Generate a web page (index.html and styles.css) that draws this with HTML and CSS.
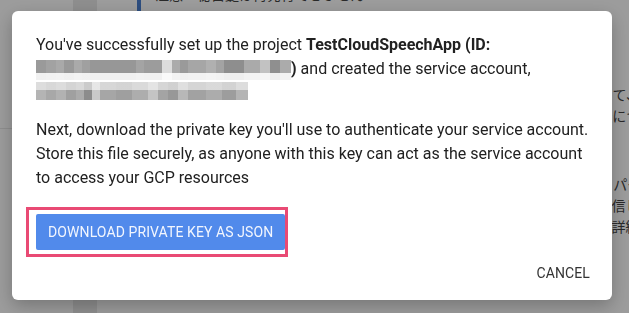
FILE: index.html
```html
<!DOCTYPE html>
<html lang="en">
<head>
  <meta charset="UTF-8" />
  <meta name="viewport" content="width=device-width, initial-scale=1.0"/>
  <title>Create service account key</title>
  <link rel="stylesheet" href="styles.css">
</head>
<body>
  <!-- Page behind the modal -->
  <div class="page">
    <nav class="side">
      <div class="side-item"></div>
    </nav>
    <div class="rail"></div>
    <main class="content">
      <div class="note">注意：秘密鍵は再発行できません</div>
      <p class="ja first">次の手順では、作成したサービスアカウントの秘密鍵を安全な場所に保存して、アプリから利用します。<br>また認証情報の取り扱いには十分注意してください。詳しい手順と設定方法については、以下を参照してください。</p>
      <p class="ja second">サービスアカウントにはプロジェクトに対するロールが自動的に付与され、パーミッションの設定が必要です。<br>設定したパーミッションに基づいて、アプリケーションからリクエストを送信します。<br>送信されたリクエストはすべてログに記録され、監査ログの画面から内容の詳細を確認できます。</p>
    </main>
  </div>

  <!-- Modal -->
  <div class="scrim">
    <div class="dialog">
      <p>You've successfully set up the project <strong>TestCloudSpeechApp (ID:<br><span class="redact r1"></span>)</strong> and created the service account,<br><span class="redact r2"></span></p>
      <p>Next, download the private key you'll use to authenticate your service account.<br>Store this file securely, as anyone with this key can act as the service account<br>to access your GCP resources</p>
      <div class="key-action">
        <button class="btn-primary">Download private key as JSON</button>
        <span class="highlight"></span>
      </div>
      <div class="actions">
        <button class="btn-text">Cancel</button>
      </div>
    </div>
  </div>
</body>
</html>
```

FILE: styles.css
```css
html, body {
  margin: 0;
  height: 100%;
  overflow: hidden;
}
body {
  font-family: Roboto, "Noto Sans CJK JP", sans-serif;
  background: #ffffff;
  color: #212121;
}

/* background page */
.page {
  display: flex;
  height: 100%;
}
.side {
  width: 73px;
  flex-shrink: 0;
}
.side-item {
  height: 128px;
  border-bottom: 1px solid #e8e8e8;
}
.rail {
  width: 24px;
  flex-shrink: 0;
  background: #e9e9e9;
}
.content {
  padding-left: 40px;
  font-family: "Noto Sans CJK JP", sans-serif;
  font-size: 14px;
  line-height: 21px;
  color: #444;
  white-space: nowrap;
}
.note {
  margin-top: -16px;
  padding: 0 0 28px 14px;
  border-left: 4px solid #4a7fd0;
}
.ja {
  margin: 0;
}
.ja.first { margin-top: 51px; }
.ja.second { margin-top: 48px; }

/* modal */
.scrim {
  position: fixed;
  inset: 0;
  background: rgba(0, 0, 0, 0.39);
  display: flex;
  align-items: flex-start;
  padding: 11px 0 0 12px;
}
.dialog {
  width: 600px;
  box-sizing: border-box;
  background: #ffffff;
  border-radius: 6px;
  padding: 22px 24px 9px 24px;
  box-shadow: 0 6px 18px rgba(0, 0, 0, 0.25);
  font-size: 16px;
  line-height: 24px;
}
.dialog p {
  margin: 0 0 13px;
  white-space: nowrap;
}
.dialog p + p {
  margin-bottom: 24px;
}
.dialog strong {
  font-weight: bold;
}

.redact {
  display: inline-block;
  width: 255px;
  height: 20px;
  vertical-align: -6px;
}
.r1 {
  background:
    linear-gradient(to bottom, transparent 0 64%, rgba(255, 255, 255, 0.86) 64%),
    linear-gradient(to right,
      #9a9a9a 0 10px, #a2a2a2 10px 20px, #a9a9a9 20px 28px, #999 28px 38px,
      #aaa 38px 46px, #a0a0a0 46px 54px, #979797 54px 100px, #a4a4a4 100px 108px,
      #9c9c9c 108px 126px, #dcdcdc 126px 136px, #ababab 136px 144px, #9a9a9a 144px 152px,
      #a6a6a6 152px 170px, #b0b0b0 170px 180px, #a3a3a3 180px 188px, #8e8e8e 188px 208px,
      #aaa 208px 224px, #c2c2c2 224px 234px, #8f8f8f 234px 244px, #ababab 244px 255px);
}
.r2 {
  width: 212px;
  height: 18px;
  vertical-align: -2px;
  background:
    linear-gradient(to bottom, rgba(255, 255, 255, 0.55) 0 44%, transparent 44%),
    linear-gradient(to right,
      #b4b4b4 0 10px, #a8a8a8 10px 20px, #b2b2b2 20px 30px, #a0a0a0 30px 40px,
      #ababab 40px 48px, #8c8c8c 48px 56px, #c9c9c9 56px 64px, #a6a6a6 64px 80px,
      #9f9f9f 80px 96px, #adadad 96px 112px, #c4c4c4 112px 122px, #a4a4a4 122px 132px,
      #989898 132px 142px, #b8b8b8 142px 152px, #a2a2a2 152px 170px, #acacac 170px 186px,
      #9d9d9d 186px 200px, #b4b4b4 200px 212px);
}

.key-action {
  position: relative;
  display: inline-block;
  vertical-align: top;
}
button {
  font-family: Roboto, sans-serif;
  font-size: 14px;
  text-transform: uppercase;
  letter-spacing: 0.1px;
  border: none;
  cursor: pointer;
  height: 36px;
}
.btn-primary {
  display: block;
  background: #518aeb;
  color: #f2f6fe;
  padding: 0 12px;
  border-radius: 2px;
}
.highlight {
  position: absolute;
  left: -10px;
  top: -7px;
  right: -3px;
  bottom: -7px;
  border: 3px solid #e94a74;
  pointer-events: none;
}
.actions {
  display: flex;
  justify-content: flex-end;
  margin-top: 5px;
}
.btn-text {
  background: none;
  color: #333;
  padding: 0;
  margin-right: -2px;
}
```
